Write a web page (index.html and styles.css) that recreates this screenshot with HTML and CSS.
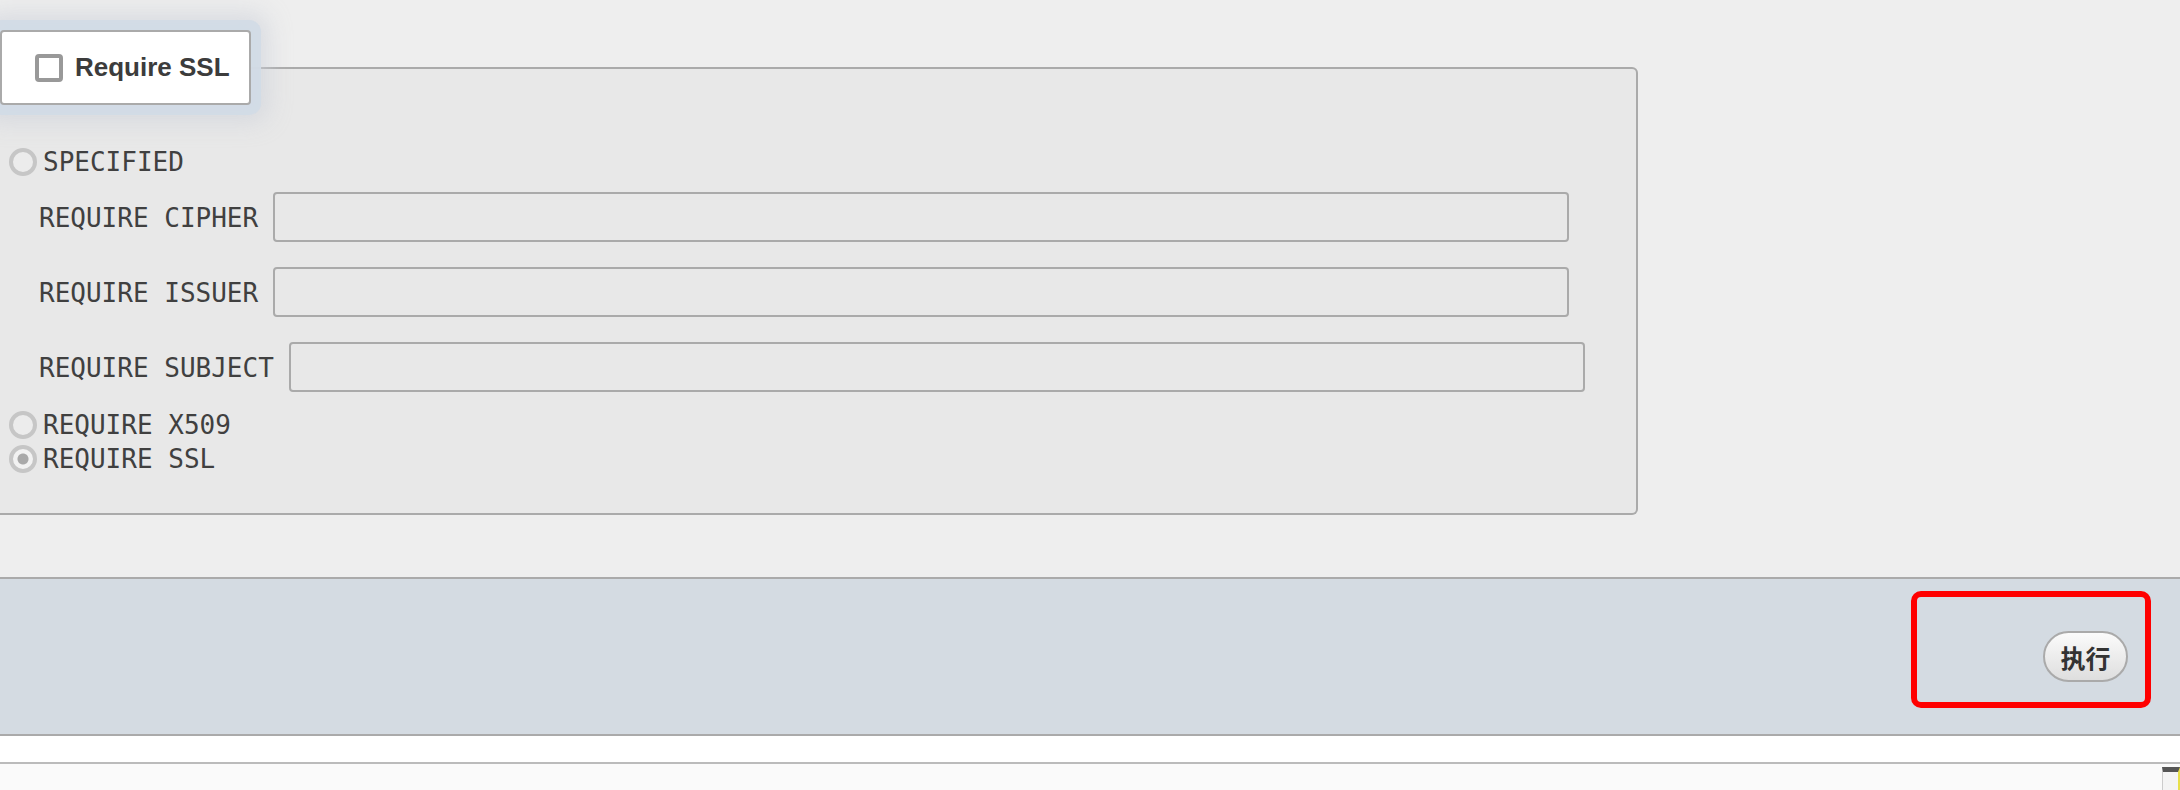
FILE: index.html
```html
<!DOCTYPE html>
<html lang="ja">
<head>
    <meta charset="UTF-8">
    <meta name="viewport" content="width=device-width, initial-scale=1.0">
    <title>Require SSL</title>
    <link rel="stylesheet" href="styles.css">
</head>
<body>

<div class="content">
    <fieldset class="ssl-box">
        <legend class="ssl-legend">
            <input type="checkbox" id="requireSsl">
            <label for="requireSsl">Require SSL</label>
        </legend>

        <label class="opt"><input type="radio" name="ssl" value="specified">SPECIFIED</label>
        <div class="fields">
            <div class="field">
                <label for="cipher">REQUIRE CIPHER</label>
                <input type="text" id="cipher">
            </div>
            <div class="field">
                <label for="issuer">REQUIRE ISSUER</label>
                <input type="text" id="issuer">
            </div>
            <div class="field">
                <label for="subject">REQUIRE SUBJECT</label>
                <input type="text" id="subject">
            </div>
        </div>
        <label class="opt"><input type="radio" name="ssl" value="x509">REQUIRE X509</label>
        <label class="opt"><input type="radio" name="ssl" value="ssl" checked>REQUIRE SSL</label>
    </fieldset>
</div>

<div class="actions">
    <div class="highlight">
        <button type="button" class="run">执行</button>
    </div>
</div>

<div class="spacer"></div>

<div class="status">
    <span class="mini-icon"></span>
</div>

</body>
</html>
```

FILE: styles.css
```css
body {
    margin: 0;
    background-color: #eeeeee;
    font-family: "DejaVu Sans Mono", monospace;
    color: #404040;
    height: 790px;
    overflow: hidden;
}
.content {
    height: 577px;
    padding-top: 30px;
    box-sizing: border-box;
}
.ssl-box {
    width: 1638px;
    box-sizing: border-box;
    margin: 0;
    padding: 40px 0 37px 0;
    border: 2px solid #aaa;
    border-left: none;
    border-radius: 0 6px 6px 0;
    background-color: #e8e8e8;
}
.ssl-legend {
    display: flex;
    align-items: center;
    width: 251px;
    height: 75px;
    box-sizing: border-box;
    padding: 0 0 0 33px;
    background-color: #fff;
    border: 2px solid #aaa;
    border-radius: 4px;
    box-shadow: 0 0 0 10px rgba(210, 219, 230, 0.95), 0 0 24px 16px rgba(205, 210, 218, 0.7);
    font-family: "Liberation Sans", Arial, sans-serif;
    font-weight: bold;
    font-size: 26px;
    color: #3c3c3c;
}
.ssl-legend input {
    appearance: none;
    width: 28px;
    height: 28px;
    margin: 0 12px 0 0;
    border: 4px solid #999;
    border-radius: 4px;
    background: #fff;
}
.opt {
    display: flex;
    align-items: center;
    height: 34px;
    font-size: 26px;
}
.opt input {
    appearance: none;
    width: 28px;
    height: 28px;
    margin: 0 6px 0 9px;
    border: 4px solid #c6c6c6;
    border-radius: 50%;
    background: #ececec;
}
.opt input:checked {
    background: radial-gradient(circle, #a9a9a9 0 5px, #f2f2f2 6px);
}
.fields {
    display: flex;
    flex-direction: column;
    gap: 25px;
    margin: 13px 0 16px 0;
}
.field {
    display: flex;
    align-items: center;
    height: 50px;
    padding-left: 39px;
    font-size: 26px;
}
.field label {
    margin-right: 15px;
    padding-top: 2px;
}
.field input {
    width: 1296px;
    height: 50px;
    box-sizing: border-box;
    border: 2px solid #aaa;
    border-radius: 4px;
    background: transparent;
    margin: 0;
}
.actions {
    height: 143px;
    border-top: 2px solid #aaa;
    border-bottom: 2px solid #aaa;
    background-color: #d4dbe2;
    display: flex;
    justify-content: flex-end;
    padding: 12px 29px 0 0;
}
.highlight {
    width: 240px;
    height: 117px;
    box-sizing: border-box;
    border: 6px solid #ff0000;
    border-radius: 10px;
    display: flex;
    align-items: flex-end;
    justify-content: flex-end;
    padding: 0 17px 20px 0;
}
.run {
    width: 85px;
    height: 51px;
    border: 2px solid #aaa;
    border-radius: 26px;
    background: linear-gradient(#fbfbfb, #dedede);
    font-family: "Noto Sans CJK SC", sans-serif;
    font-weight: bold;
    font-size: 25px;
    color: #333;
    padding: 0;
    cursor: pointer;
}
.spacer {
    height: 26px;
    background-color: #fff;
}
.status {
    height: 26px;
    border-top: 2px solid #bbb;
    background-color: #fafafa;
    display: flex;
    justify-content: flex-end;
    padding-top: 3px;
}
.mini-icon {
    width: 18px;
    height: 24px;
    box-sizing: border-box;
    border: 1px solid #ccc;
    border-right: 2px solid #e8e04a;
    border-top: 5px solid #555;
    background: #f4f4f4;
}
```
